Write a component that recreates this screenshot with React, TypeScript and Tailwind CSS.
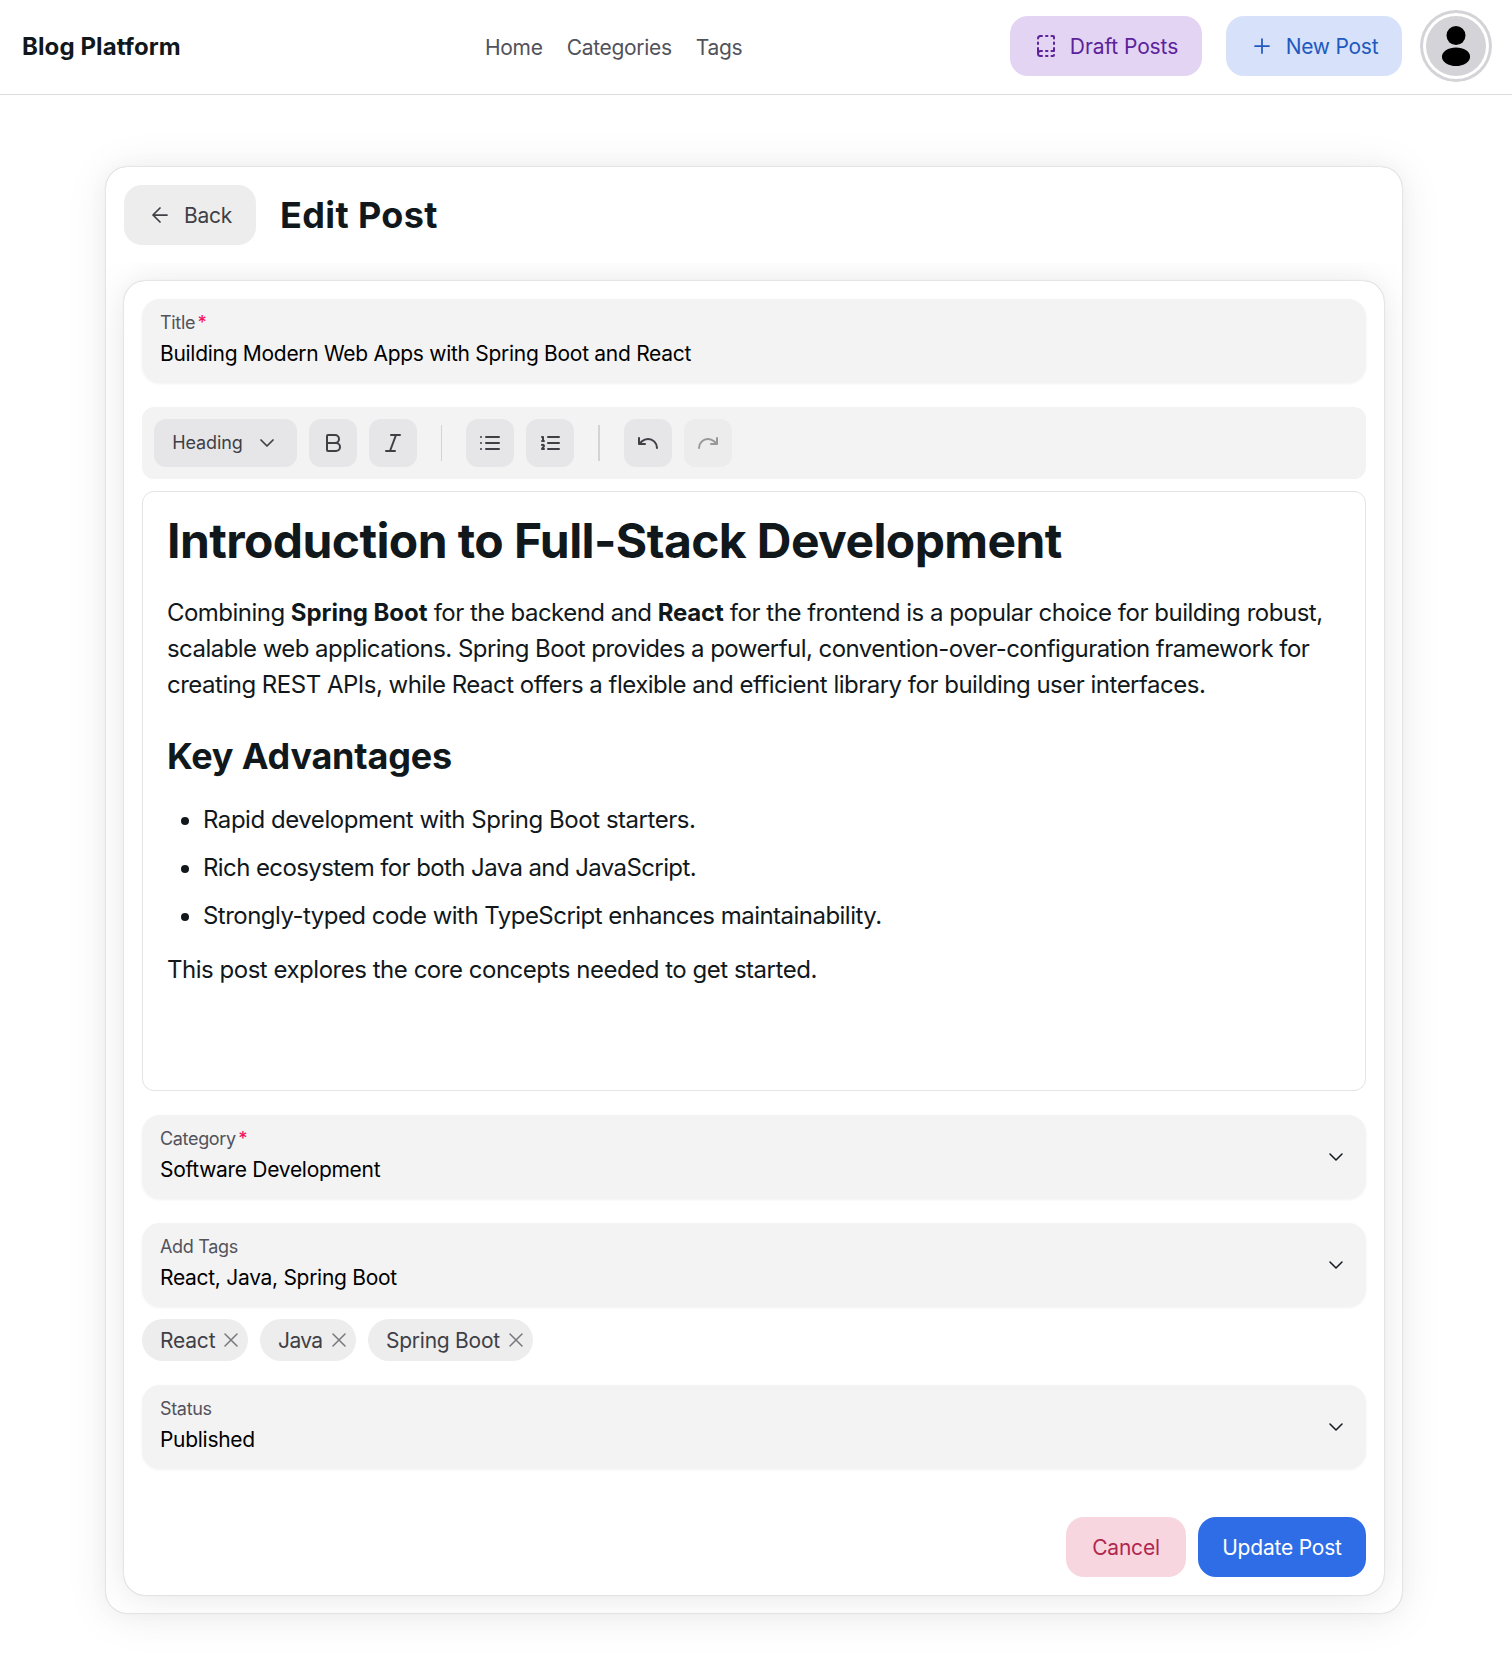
import type { ReactNode } from "react";

function Icon({ children, stroke = 2 }: { children: ReactNode; stroke?: number }) {
  return (
    <svg
      className="size-6 shrink-0"
      viewBox="0 0 24 24"
      fill="none"
      stroke="currentColor"
      strokeWidth={stroke}
      strokeLinecap="round"
      strokeLinejoin="round"
    >
      {children}
    </svg>
  );
}

function Navbar() {
  return (
    <header className="flex h-[95px] items-start justify-between border-b border-[#dcdcdd] pt-4 pr-[26px] pl-[22px]">
      <div className="flex h-[62px] w-[463px] items-center text-2xl font-bold tracking-[0.1px]">Blog Platform</div>
      <nav className="mt-0.5 flex h-[60px] flex-1 items-center gap-6 text-[21px] tracking-[-0.3px] text-[#52525b]">
        <a>Home</a>
        <a>Categories</a>
        <a>Tags</a>
      </nav>
      <div className="flex items-center gap-6">
        <button className="flex h-[60px] w-48 items-center justify-center gap-3 rounded-[18px] bg-[#e4d4f4] text-[21px] tracking-[-0.1px] text-[#5b2299]">
          <Icon>
            <path d="M12 17h1.5M12 22h1.5M12 2h1.5M17.5 22H19a1 1 0 0 0 1-1M17.5 2H19a1 1 0 0 1 1 1v1.5M20 14v3h-2.5M20 8.500V10M4 10V8.500M4 19.500V14M4 4.500A2.500 2.500 0 0 1 6.500 2H8M8 22H6.500a1 1 0 0 1 0-5H8" />
          </Icon>
          <span className="pt-0.5">Draft Posts</span>
        </button>
        <button className="flex h-[60px] w-44 items-center justify-center gap-3 rounded-[18px] bg-[#d7e1f9] text-[21px] tracking-[-0.25px] text-[#2159bf]">
          <Icon stroke={1.75}>
            <path d="M5 12h14M12 5v14" />
          </Icon>
          <span className="pt-0.5">New Post</span>
        </button>
        <div className="flex size-[60px] items-center justify-center rounded-full bg-[#d4d4d8] text-black ring-3 ring-[#d4d4d8] ring-offset-3 ring-offset-white">
          <svg className="size-12" viewBox="0 0 24 24" fill="currentColor">
            <circle cx="12" cy="6.750" r="4.750" />
            <path d="M17.080 14.150C14.290 12.290 9.740 12.290 6.930 14.150C5.660 15 4.960 16.150 4.960 17.380C4.960 18.610 5.660 19.750 6.920 20.590C8.320 21.530 10.160 22 12 22C13.840 22 15.680 21.530 17.080 20.590C18.340 19.740 19.040 18.600 19.040 17.360C19.030 16.130 18.340 14.990 17.080 14.150Z" />
          </svg>
        </div>
      </div>
    </header>
  );
}

function Field({ label, value, required, select }: { label: string; value: string; required?: boolean; select?: boolean }) {
  return (
    <div className="flex h-[84px] items-center justify-between rounded-[18px] bg-[#f3f3f3] px-[18px] shadow-[0_1px_3px_rgba(0,0,0,0.05)]">
      <div className="flex flex-col pb-[3px]">
        <span className="text-[18px] leading-6 tracking-[-0.33px] text-[#52525b]">
          {label}
          {required && <span className="ml-[2.5px] font-medium text-[#f31260]">*</span>}
        </span>
        <span className="mt-1 text-[21px] leading-[30px] tracking-[-0.29px] text-black">{value}</span>
      </div>
      {select && (
        <Icon stroke={1.5}>
          <path d="m6 9 6 6 6-6" />
        </Icon>
      )}
    </div>
  );
}

function ToolButton({ children, disabled }: { children: ReactNode; disabled?: boolean }) {
  return (
    <button
      disabled={disabled}
      className="flex size-12 items-center justify-center rounded-xl bg-[#e6e6e8] text-[#3f3f46] disabled:opacity-50"
    >
      {children}
    </button>
  );
}

function Toolbar() {
  return (
    <div className="flex h-[72px] items-center gap-3 rounded-xl bg-[#f3f3f3] px-3">
      <button className="flex h-12 w-[143px] items-center justify-center gap-3 rounded-xl bg-[#e6e6e8] text-[18px] tracking-[-0.1px] text-[#3f3f46]">
        <span className="pb-px">Heading</span>
        <Icon stroke={1.75}>
          <path d="m6 9 6 6 6-6" />
        </Icon>
      </button>
      <ToolButton>
        <Icon>
          <path d="M6 12h9a4 4 0 0 1 0 8H7a1 1 0 0 1-1-1V5a1 1 0 0 1 1-1h7a4 4 0 0 1 0 8" />
        </Icon>
      </ToolButton>
      <ToolButton>
        <Icon>
          <path d="M19 4h-9M14 20H5M15 4 9 20" />
        </Icon>
      </ToolButton>
      <div className="mx-3 h-9 w-px bg-[#d4d4d8]" />
      <ToolButton>
        <Icon>
          <path d="M8 6h13M8 12h13M8 18h13M3 6h.01M3 12h.01M3 18h.01" />
        </Icon>
      </ToolButton>
      <ToolButton>
        <Icon>
          <path d="M10 6h11M10 12h11M10 18h11M4 6h1v4M4 10h2M6 18H4c0-1 2-2 2-3s-1-1.500-2-1" />
        </Icon>
      </ToolButton>
      <div className="mx-3 h-9 w-0.5 bg-[#d4d4d8]" />
      <ToolButton>
        <Icon>
          <path d="M3 7v6h6M21 17a9 9 0 0 0-9-9 9 9 0 0 0-6 2.300L3 13" />
        </Icon>
      </ToolButton>
      <ToolButton disabled>
        <Icon>
          <path d="M21 7v6h-6M3 17a9 9 0 0 1 9-9 9 9 0 0 1 6 2.300L21 13" />
        </Icon>
      </ToolButton>
    </div>
  );
}

function Editor() {
  return (
    <div className="mt-3 h-[600px] rounded-xl border border-[#e4e4e7] px-6 pt-[25px] text-2xl leading-9">
      <h1 className="text-5xl leading-none font-bold tracking-[-0.59px] whitespace-nowrap">Introduction to Full-Stack Development</h1>
      <p className="mt-[30px] whitespace-nowrap">
        <span className="tracking-[-0.53px]">
          Combining <strong className="font-bold tracking-[-0.05px]">Spring Boot</strong> for the backend and{" "}
          <strong className="font-bold tracking-[-0.2px]">React</strong>
        </span>
        <span className="tracking-[-0.475px]"> for the frontend is a popular choice for building robust,</span>
        <br />
        <span className="tracking-[-0.55px]">
          scalable web applications. Spring Boot provides a powerful, convention-over-configuration framework for
        </span>
        <br />
        <span className="tracking-[-0.5px]">
          creating REST APIs, while React offers a flexible and efficient library for building user interfaces.
        </span>
      </p>
      <h2 className="mt-[29px] text-4xl leading-[48px] font-bold tracking-[-0.2px]">Key Advantages</h2>
      <ul className="mt-[22px] list-disc space-y-3 pl-9">
        <li className="tracking-[-0.46px]">Rapid development with Spring Boot starters.</li>
        <li className="tracking-[-0.6px]">Rich ecosystem for both Java and JavaScript.</li>
        <li className="tracking-[-0.525px]">Strongly-typed code with TypeScript enhances maintainability.</li>
      </ul>
      <p className="mt-[18px] tracking-[-0.475px]">This post explores the core concepts needed to get started.</p>
    </div>
  );
}

function Chip({ label, className }: { label: string; className: string }) {
  return (
    <div className={`flex h-[42px] items-center justify-between rounded-full bg-[#ededed] pr-[5px] pl-[18px] text-[21px] text-[#3f3f46] ${className}`}>
      <span className="pt-0.5 whitespace-nowrap">{label}</span>
      <span className="text-[#77777c]">
        <Icon stroke={1.5}>
          <path d="M18 6 6 18M6 6l12 12" />
        </Icon>
      </span>
    </div>
  );
}

const cardShadow =
  "shadow-[0_0_22.5px_rgba(0,0,0,0.03),0_3px_45px_rgba(0,0,0,0.08),0_0_1.5px_rgba(0,0,0,0.3)]";

export default function App() {
  return (
    <div className="h-[1662px] overflow-hidden bg-white font-['Inter',sans-serif] text-[#11181c] antialiased">
      <Navbar />
      <main className={`mt-[72px] ml-[106px] w-[1296px] overflow-hidden rounded-[21px] bg-white ${cardShadow}`}>
        <div className="flex items-center gap-6 p-[18px]">
          <button className="flex h-[60px] w-[132px] items-center justify-center gap-3 rounded-[18px] bg-[#ededed] text-[21px] tracking-[-0.3px] text-[#3f3f46]">
            <Icon stroke={1.75}>
              <path d="m12 19-7-7 7-7M19 12H5" />
            </Icon>
            <span className="pt-0.5">Back</span>
          </button>
          <h1 className="text-4xl font-bold tracking-[0.38px]">Edit Post</h1>
        </div>
        <div className="overflow-hidden p-[18px]">
          <div className={`rounded-[21px] bg-white p-[18px] ${cardShadow}`}>
            <Field label="Title" value="Building Modern Web Apps with Spring Boot and React" required />
            <div className="my-6">
              <Toolbar />
              <Editor />
            </div>
            <Field label="Category" value="Software Development" required select />
            <div className="my-6">
              <Field label="Add Tags" value="React, Java, Spring Boot" select />
              <div className="mt-3 flex gap-3">
                <Chip label="React" className="w-[106px] tracking-[-0.2px]" />
                <Chip label="Java" className="w-[96px] tracking-[-0.6px]" />
                <Chip label="Spring Boot" className="w-[165px] tracking-[-0.25px]" />
              </div>
            </div>
            <Field label="Status" value="Published" select />
            <div className="mt-12 flex justify-end gap-3">
              <button className="h-[60px] w-[120px] rounded-[18px] bg-[#f8d6df] pt-0.5 text-[21px] tracking-[-0.2px] text-[#b0274f]">Cancel</button>
              <button className="h-[60px] w-[168px] rounded-[18px] bg-[#2f6de6] pt-0.5 text-[21px] tracking-[-0.2px] text-white">Update Post</button>
            </div>
          </div>
        </div>
      </main>
    </div>
  );
}
